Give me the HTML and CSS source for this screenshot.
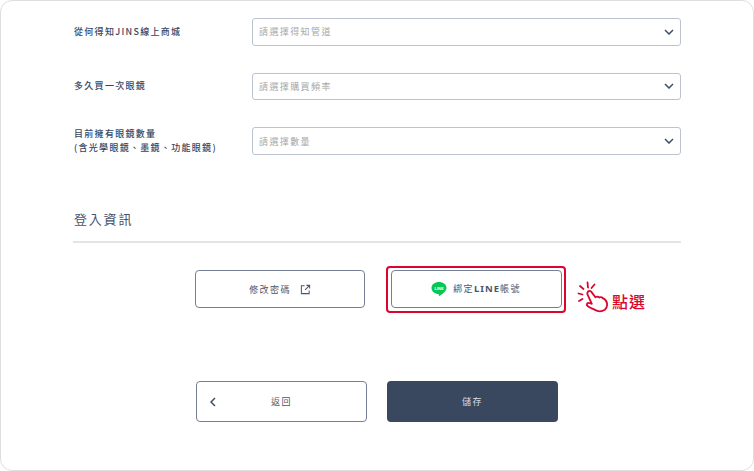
FILE: index.html
```html
<!DOCTYPE html>
<html lang="zh-Hant">
<head>
    <meta charset="UTF-8">
    <meta name="viewport" content="width=device-width, initial-scale=1.0">
    <title>會員資料</title>
    <link rel="stylesheet" href="styles.css">
</head>
<body>
    <div class="panel">
        <div class="form-rows">
            <div class="form-row">
                <div class="form-label">從何得知JINS線上商城</div>
                <div class="select">
                    <span>請選擇得知管道</span>
                    <svg class="select-arrow" viewBox="0 0 10 6"><path d="M1 1l4 4 4-4"/></svg>
                </div>
            </div>
            <div class="form-row">
                <div class="form-label">多久買一次眼鏡</div>
                <div class="select">
                    <span>請選擇購買頻率</span>
                    <svg class="select-arrow" viewBox="0 0 10 6"><path d="M1 1l4 4 4-4"/></svg>
                </div>
            </div>
            <div class="form-row">
                <div class="form-label">目前擁有眼鏡數量<br>(含光學眼鏡、墨鏡、功能眼鏡)</div>
                <div class="select">
                    <span>請選擇數量</span>
                    <svg class="select-arrow" viewBox="0 0 10 6"><path d="M1 1l4 4 4-4"/></svg>
                </div>
            </div>
        </div>

        <h2 class="section-title">登入資訊</h2>

        <div class="login-row">
            <a class="btn btn-password">
                修改密碼
                <svg class="icon-external" viewBox="0 0 12 12"><path d="M5 2H1.500v8.500H10V7M7 1.500h3.500V5M10.500 1.500L5.500 6.500"/></svg>
            </a>
            <div class="highlight">
                <a class="btn btn-line">
                    <svg class="icon-line" viewBox="0 0 16 16">
                        <path fill="#06c755" d="M8 1c4.200 0 7.500 2.600 7.500 5.900 0 3-3.600 5.900-7.200 8-.5.3-.6-.2-.5-.6l.1-1.100C3.700 12.800.5 10.300.5 6.900.5 3.600 3.800 1 8 1z"/>
                        <text x="8" y="8.800" class="icon-line-text">LINE</text>
                    </svg>
                    綁定<b>LINE</b>帳號
                </a>
            </div>
            <div class="click-hint">
                <svg class="icon-hand" viewBox="0 0 32 32">
                    <path class="hand-ray" d="M1.500 12.500l4 1M3 5l3.500 3M10.500 1.500l.5 5M17.500 3.500l-3 3.500M2 20l3.500-2"/>
                    <path class="hand-body" d="M11 10.500c1.200-1 2.600-.7 3.400.4l4 5.300c1.500-.8 3-.5 4 .3 1.200-.5 2.600-.2 3.400.7 2 .8 3.700 2.600 4.200 5 .5 2.800-.3 5-2.200 6.500-2.400 1.600-5.600 2-8.200.9-2.400-1-7.800-3.600-9-4.600-1.600-1.400-.3-3.500 1.700-3l2.500.8-4.300-9.500c-.5-1-.2-1.700.5-2.300z"/>
                </svg>
                <span>點選</span>
            </div>
        </div>

        <div class="action-row">
            <a class="btn btn-back">
                <svg class="icon-back" viewBox="0 0 6 10"><path d="M5 1L1 5l4 4"/></svg>
                返回
            </a>
            <a class="btn btn-save">儲存</a>
        </div>
    </div>
</body>
</html>
```

FILE: styles.css
```css
* {
    box-sizing: border-box;
    margin: 0;
    padding: 0;
}

body {
    width: 754px;
    height: 471px;
    overflow: hidden;
    background-color: #fff;
    font-family: "Noto Sans CJK TC", "Noto Sans", sans-serif;
    color: #38465f;
}

.panel {
    width: 754px;
    height: 471px;
    padding: 17px 72px 0;
    border: 1px solid #dedede;
    border-radius: 12px;
    background-color: #fff;
}

.form-rows {
    display: flex;
    flex-direction: column;
    gap: 27px;
}

.form-row {
    display: flex;
    align-items: center;
}

.form-label {
    width: 179px;
    padding-left: 1px;
    font-size: 9px;
    font-weight: 500;
    line-height: 14px;
    letter-spacing: 1.3px;
    white-space: nowrap;
}

.select {
    flex: 1;
    height: 27.5px;
    padding: 0 6px 0 6px;
    display: flex;
    align-items: center;
    justify-content: space-between;
    border: 1px solid #bcc2cf;
    border-radius: 3px;
    font-size: 9px;
    letter-spacing: 1.4px;
    color: #a8a8a8;
}

.select-arrow {
    width: 10px;
    height: 6px;
    fill: none;
    stroke: #3f4c68;
    stroke-width: 1.5;
}

.section-title {
    margin-top: 53.5px;
    padding: 0 0 12px 1px;
    border-bottom: 2px solid #e4e4e4;
    font-size: 13px;
    font-weight: 400;
    line-height: 20px;
    letter-spacing: 1.8px;
    color: #46536b;
}

.login-row {
    margin-top: 23px;
    padding-left: 122px;
    display: flex;
    align-items: center;
}

.btn {
    display: flex;
    align-items: center;
    justify-content: center;
    border-radius: 4px;
    font-size: 9px;
    letter-spacing: 1.4px;
}

.btn-password {
    width: 170px;
    height: 38px;
    margin-right: 21px;
    gap: 9px;
    border: 1px solid #747f96;
    color: #4a566e;
}

.icon-external {
    width: 11px;
    height: 11px;
    fill: none;
    stroke: #4a566e;
    stroke-width: 1.1;
}

.highlight {
    width: 180px;
    height: 47px;
    padding: 2px;
    border: 2px solid #d9072d;
    border-radius: 4px;
}

.btn-line {
    width: 171px;
    height: 38px;
    margin: 0 auto;
    border: 1px solid #747f96;
    color: #4a566e;
}

.btn-line b {
    font-family: "Noto Sans", sans-serif;
    font-weight: 700;
    font-size: 9.5px;
    letter-spacing: 1px;
}

.icon-line {
    width: 16px;
    height: 16px;
    margin-right: 6px;
}

.icon-line-text {
    font-family: "Liberation Sans", sans-serif;
    font-size: 4px;
    font-weight: 700;
    letter-spacing: 0;
    fill: #fff;
    text-anchor: middle;
}

.click-hint {
    margin: 15px 0 0 11px;
    display: flex;
    align-items: center;
    gap: 3px;
    font-size: 16px;
    font-weight: 500;
    line-height: 20px;
    color: #d9072d;
}

.click-hint span {
    margin-top: 8px;
    letter-spacing: 1px;
}

.icon-hand {
    width: 32px;
    height: 32px;
    fill: none;
    stroke: #d9072d;
    stroke-width: 1.8;
    stroke-linecap: round;
    stroke-linejoin: round;
}

.action-row {
    margin-top: 68px;
    padding-left: 123px;
    display: flex;
    gap: 20px;
}

.action-row .btn {
    width: 171px;
    height: 41px;
}

.btn-back {
    position: relative;
    border: 1px solid #747f96;
    color: #4a566e;
}

.icon-back {
    position: absolute;
    left: 13px;
    top: 15px;
    width: 6px;
    height: 10px;
    fill: none;
    stroke: #3f4c68;
    stroke-width: 1.5;
}

.btn-save {
    background-color: #39475f;
    color: #d8dce3;
}
```
